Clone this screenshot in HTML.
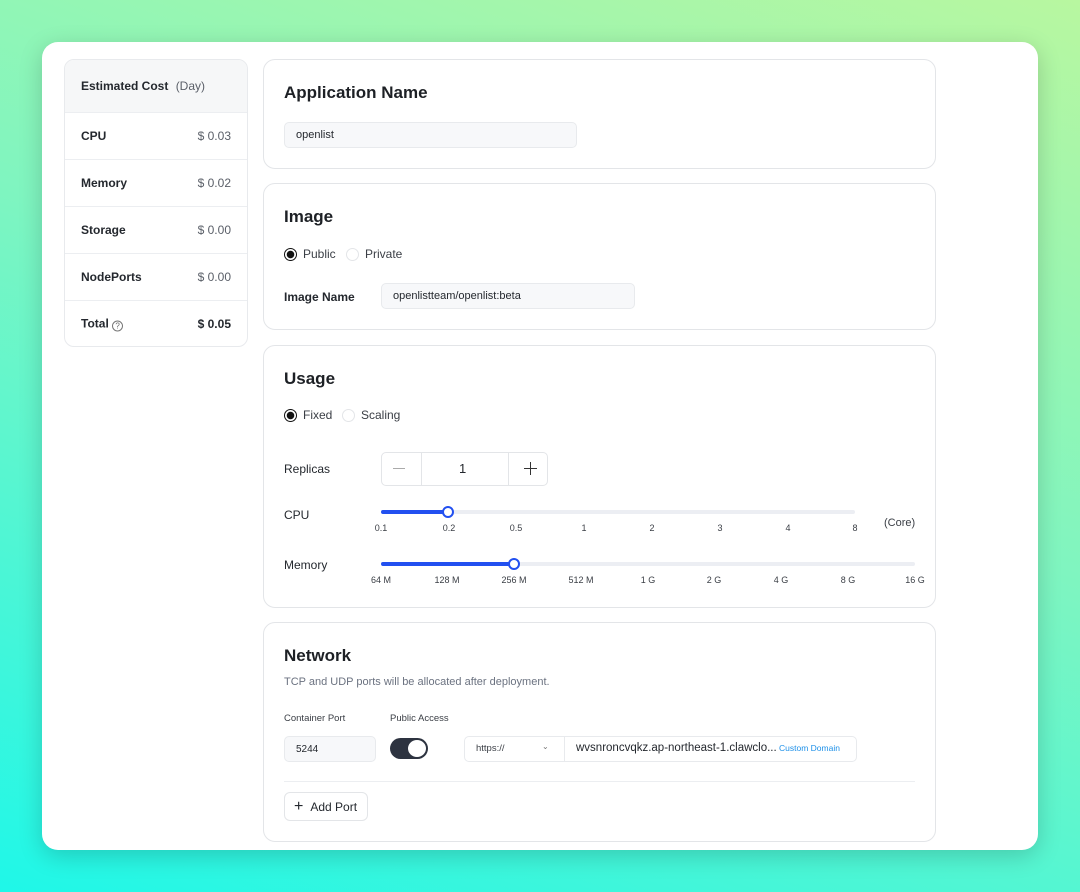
<!DOCTYPE html>
<html><head><meta charset="utf-8"><style>
*{box-sizing:border-box;margin:0;padding:0}
body{width:1080px;height:892px;overflow:hidden;font-family:"Liberation Sans",sans-serif;color:#24282e;background:linear-gradient(200deg,#b8f7a0 0%,#7ff5c0 45%,#1ff7e8 100%);position:relative}
.a{position:absolute}
.card{left:42px;top:42px;width:996px;height:808px;background:#fff;border-radius:16px;box-shadow:0 6px 24px rgba(0,0,0,.18)}
.cost{left:64px;top:59px;width:184px;height:288px;border:1px solid #e8eaed;border-radius:10px;overflow:hidden;background:#fff}
.row{position:absolute;left:0;width:100%;height:47px;border-top:1px solid #eceef1;font-size:12px;font-weight:bold;color:#24282e}
.row span{position:absolute;top:50%;transform:translateY(-50%)}
.row .l{left:16px}.row .r{right:16px;font-weight:normal;color:#5a5f68}
.sec{left:263px;width:673px;border:1px solid #e3e5e8;border-radius:12px;background:#fff}
.t{font-size:17px;font-weight:bold;color:#1d2025}
.lbl{font-size:12px;color:#24282e;font-weight:bold}
.inp{background:#f7f8fa;border:1px solid #e8eaed;border-radius:5px;font-size:11px;padding-left:11px;display:flex;align-items:center;color:#24282e}
.tk{font-size:9px;color:#3a3e45;transform:translateX(-50%)}
.rad{width:13px;height:13px;border-radius:50%;border:1px solid #e3e5e8}
.rad.on{border:1.5px solid #111;background:radial-gradient(#111 0 3.5px,#fff 4px)}
.rt{font-size:12px;color:#3a3e45}
</style></head><body>
<div class="a card"></div>
<div class="a cost">
<div class="row" style="top:0;height:52px;border:none;background:#f6f7f8"><span class="l">Estimated Cost <span style="position:static;transform:none;font-weight:normal;color:#5a5f68;margin-left:4px">(Day)</span></span></div>
<div class="row" style="top:52px"><span class="l">CPU</span><span class="r">$ 0.03</span></div>
<div class="row" style="top:99px"><span class="l">Memory</span><span class="r">$ 0.02</span></div>
<div class="row" style="top:146px"><span class="l">Storage</span><span class="r">$ 0.00</span></div>
<div class="row" style="top:193px"><span class="l">NodePorts</span><span class="r">$ 0.00</span></div>
<div class="row" style="top:240px"><span class="l">Total <span style="position:static;transform:none;display:inline-block;width:11px;height:11px;border:1px solid #777;border-radius:50%;font-size:8px;text-align:center;line-height:9px;font-weight:normal;color:#666;vertical-align:-1px">?</span></span><span class="r" style="font-weight:bold;color:#24282e">$ 0.05</span></div>
</div>

<div class="a sec" style="top:59px;height:110px"></div>
<div class="a t" style="left:284px;top:83px">Application Name</div>
<div class="a inp" style="left:284px;top:122px;width:293px;height:26px">openlist</div>

<div class="a sec" style="top:183px;height:147px"></div>
<div class="a t" style="left:284px;top:207px">Image</div>
<div class="a rad on" style="left:284px;top:248px"></div><div class="a rt" style="left:303px;top:247px">Public</div>
<div class="a rad" style="left:346px;top:248px"></div><div class="a rt" style="left:365px;top:247px">Private</div>
<div class="a lbl" style="left:284px;top:290px">Image Name</div>
<div class="a inp" style="left:381px;top:283px;width:254px;height:26px">openlistteam/openlist:beta</div>

<div class="a sec" style="top:345px;height:263px"></div>
<div class="a t" style="left:284px;top:369px">Usage</div>
<div class="a rad on" style="left:284px;top:409px"></div><div class="a rt" style="left:303px;top:408px">Fixed</div>
<div class="a rad" style="left:342px;top:409px"></div><div class="a rt" style="left:361px;top:408px">Scaling</div>
<div class="a lbl" style="left:284px;top:462px;font-weight:normal">Replicas</div>
<div class="a" style="left:381px;top:452px;width:167px;height:34px;border:1px solid #e3e5e8;border-radius:5px"></div>
<div class="a" style="left:421px;top:452px;width:1px;height:34px;background:#e3e5e8"></div>
<div class="a" style="left:508px;top:452px;width:1px;height:34px;background:#e3e5e8"></div>
<div class="a" style="left:393px;top:468px;width:12px;height:1px;background:#aaa"></div>
<div class="a" style="left:459px;top:461px;font-size:13px">1</div>
<div class="a" style="left:524px;top:468px;width:13px;height:1.2px;background:#333"></div>
<div class="a" style="left:530px;top:462px;width:1.2px;height:13px;background:#333"></div>
<div class="a lbl" style="left:284px;top:508px;font-weight:normal">CPU</div>
<div class="a" style="left:381px;top:510px;width:474px;height:4px;background:#eceef3;border-radius:2px"></div>
<div class="a" style="left:381px;top:510px;width:67px;height:4px;background:#2250f0;border-radius:2px"></div>
<div class="a" style="left:442px;top:506px;width:12px;height:12px;border:2px solid #2250f0;background:#fff;border-radius:50%"></div>
<div class="a tk" style="left:381px;top:523px">0.1</div><div class="a tk" style="left:449px;top:523px">0.2</div><div class="a tk" style="left:516px;top:523px">0.5</div><div class="a tk" style="left:584px;top:523px">1</div><div class="a tk" style="left:652px;top:523px">2</div><div class="a tk" style="left:720px;top:523px">3</div><div class="a tk" style="left:788px;top:523px">4</div><div class="a tk" style="left:855px;top:523px">8</div>
<div class="a" style="left:884px;top:517px;font-size:11px;color:#3a3e45">(Core)</div>
<div class="a lbl" style="left:284px;top:558px;font-weight:normal">Memory</div>
<div class="a" style="left:381px;top:562px;width:534px;height:4px;background:#eceef3;border-radius:2px"></div>
<div class="a" style="left:381px;top:562px;width:133px;height:4px;background:#2250f0;border-radius:2px"></div>
<div class="a" style="left:508px;top:558px;width:12px;height:12px;border:2px solid #2250f0;background:#fff;border-radius:50%"></div>
<div class="a tk" style="left:381px;top:575px">64 M</div><div class="a tk" style="left:447px;top:575px">128 M</div><div class="a tk" style="left:514px;top:575px">256 M</div><div class="a tk" style="left:581px;top:575px">512 M</div><div class="a tk" style="left:648px;top:575px">1 G</div><div class="a tk" style="left:714px;top:575px">2 G</div><div class="a tk" style="left:781px;top:575px">4 G</div><div class="a tk" style="left:848px;top:575px">8 G</div><div class="a tk" style="left:915px;top:575px">16 G</div>

<div class="a sec" style="top:622px;height:220px"></div>
<div class="a t" style="left:284px;top:646px">Network</div>
<div class="a" style="left:284px;top:676px;font-size:11px;color:#6b7280">TCP and UDP ports will be allocated after deployment.</div>
<div class="a" style="left:284px;top:713px;font-size:9.5px;color:#3a3e45">Container Port</div>
<div class="a" style="left:390px;top:713px;font-size:9.5px;color:#3a3e45">Public Access</div>
<div class="a inp" style="left:284px;top:736px;width:92px;height:26px;font-size:10px">5244</div>
<div class="a" style="left:390px;top:738px;width:38px;height:21px;background:#2d3340;border-radius:11px"></div>
<div class="a" style="left:408px;top:740px;width:18px;height:17px;background:#fff;border-radius:50%"></div>
<div class="a" style="left:464px;top:736px;width:393px;height:26px;border:1px solid #e8eaed;border-radius:5px"></div>
<div class="a" style="left:564px;top:736px;width:1px;height:26px;background:#e8eaed"></div>
<div class="a" style="left:476px;top:743px;font-size:9.5px;color:#3a3e45">https://</div>
<div class="a" style="left:542px;top:742px;font-size:8px;color:#777">⌄</div>
<div class="a" style="left:576px;top:742px;font-size:11.5px;color:#24282e">wvsnroncvqkz.ap-northeast-1.clawclo...</div>
<div class="a" style="left:779px;top:743px;font-size:8.5px;color:#1e90e8">Custom Domain</div>
<div class="a" style="left:284px;top:781px;width:631px;height:1px;background:#eceef1"></div>
<div class="a" style="left:284px;top:792px;width:84px;height:29px;border:1px solid #e3e5e8;border-radius:6px;font-size:12px;color:#24282e;display:flex;align-items:center;padding-left:9px"><span style="font-size:16px;margin-right:7px;font-weight:300">+</span>Add Port</div>
</body></html>
